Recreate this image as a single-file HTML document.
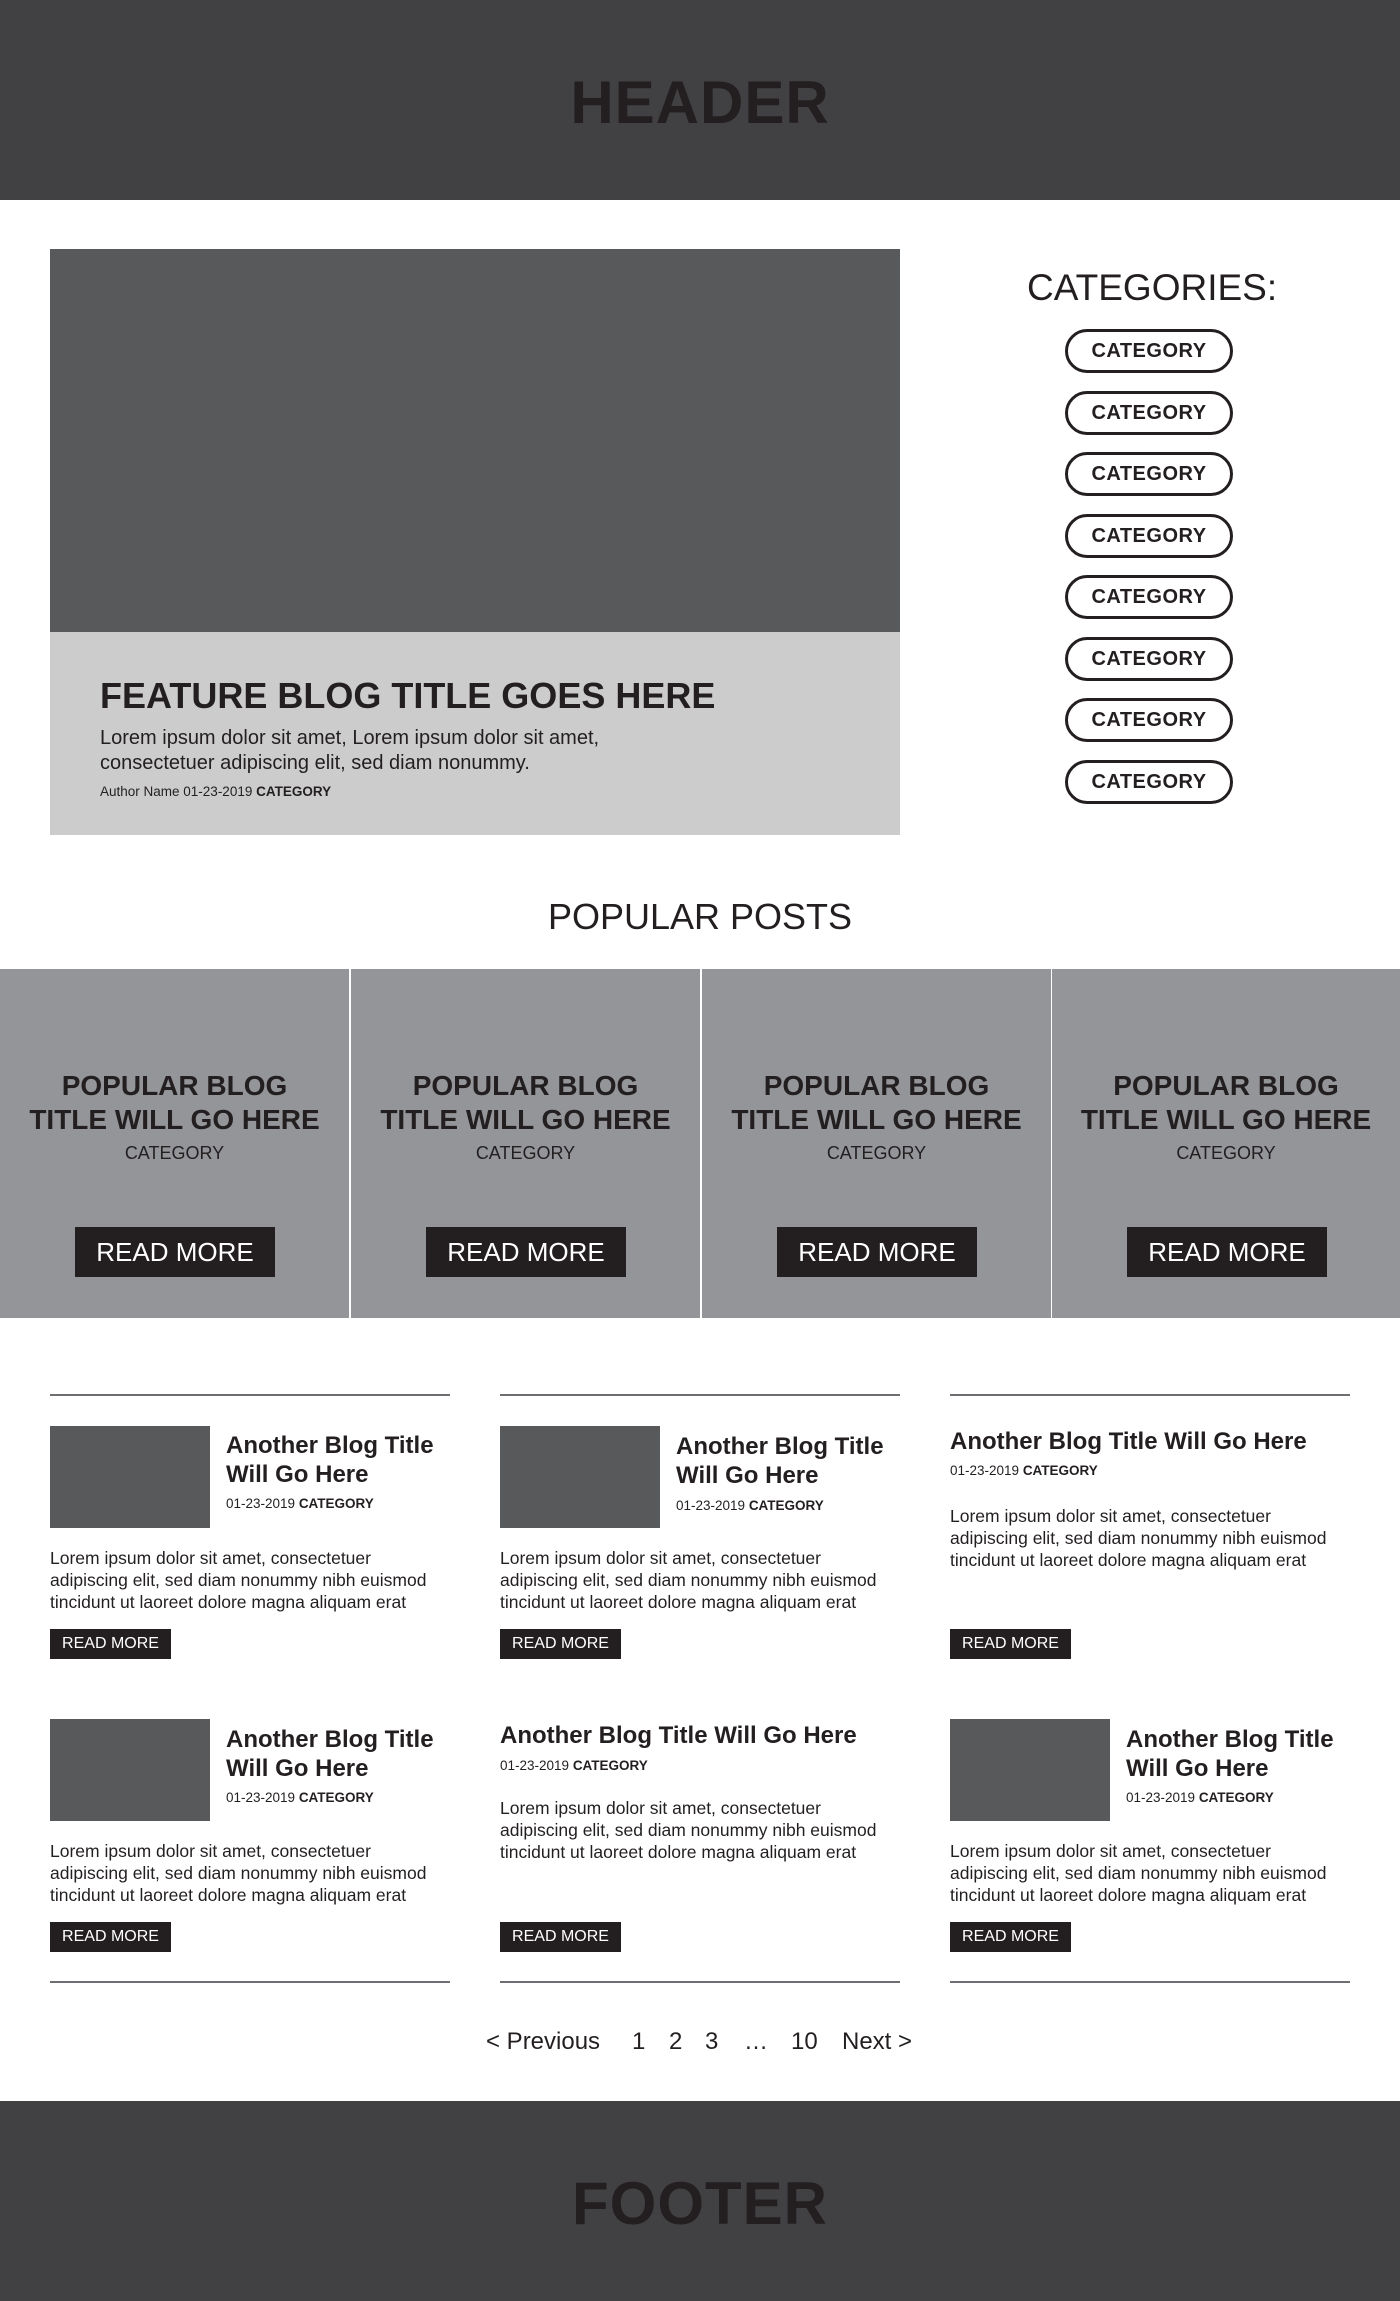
<!DOCTYPE html>
<html><head><meta charset="utf-8"><style>
*{margin:0;padding:0;box-sizing:border-box}
body{width:1400px;height:2301px;position:relative;background:#fff;font-family:"Liberation Sans",Arial,sans-serif;color:#231f20;overflow:hidden}
.a{position:absolute}
.hdr{left:0;width:1400px;height:200px;background:#414042;display:flex;align-items:center;justify-content:center;font-weight:bold;font-size:60px;color:#231f20;letter-spacing:1px}
.pill{left:1065px;width:168px;height:44px;border:3px solid #231f20;border-radius:22px;font-weight:bold;font-size:20px;display:flex;align-items:center;justify-content:center;letter-spacing:.5px}
.card{top:969px;width:349px;height:349px;background:#939598;text-align:center}
.card h3{position:absolute;top:100px;left:0;right:0;font-size:28px;line-height:34px;font-weight:bold}
.card .c{position:absolute;top:174px;left:0;right:0;font-size:18px}
.card .b{position:absolute;top:258px;left:75px;width:200px;height:50px;background:#231f20;color:#fff;font-size:26px;line-height:50px}
.line{height:2px;background:#6d6e71;width:400px}
.img{width:160px;height:102px;background:#58595b}
.t{font-weight:bold;font-size:24px;line-height:29px}
.m{font-size:13.5px}
.m b{font-weight:bold}
.p{font-size:17.5px;line-height:22px;width:400px}
.rm{width:121px;height:30px;background:#231f20;color:#fff;font-size:16px;line-height:30px;text-align:center}
.pg{top:2028px;font-size:24px}
</style></head><body>
<div class="a hdr" style="top:0;padding-top:4px">HEADER</div>

<div class="a" style="left:50px;top:249px;width:850px;height:383px;background:#58595b"></div>
<div class="a" style="left:50px;top:632px;width:850px;height:203px;background:#cccccc"></div>
<div class="a" style="left:100px;top:675px;font-size:36px;font-weight:bold">FEATURE BLOG TITLE GOES HERE</div>
<div class="a" style="left:100px;top:726px;font-size:20px;line-height:25px">Lorem ipsum dolor sit amet, Lorem ipsum dolor sit amet,<br>consectetuer adipiscing elit, sed diam nonummy.</div>
<div class="a" style="left:100px;top:784px;font-size:13.5px">Author Name 01-23-2019 <b>CATEGORY</b></div>

<div class="a" style="left:1027px;top:267px;font-size:37px">CATEGORIES:</div>
<div class="a pill" style="top:329px">CATEGORY</div>
<div class="a pill" style="top:391px">CATEGORY</div>
<div class="a pill" style="top:452px">CATEGORY</div>
<div class="a pill" style="top:514px">CATEGORY</div>
<div class="a pill" style="top:575px">CATEGORY</div>
<div class="a pill" style="top:637px">CATEGORY</div>
<div class="a pill" style="top:698px">CATEGORY</div>
<div class="a pill" style="top:760px">CATEGORY</div>

<div class="a" style="left:0;width:1400px;top:896px;text-align:center;font-size:36px">POPULAR POSTS</div>

<div class="a card" style="left:0"><h3>POPULAR BLOG<br>TITLE WILL GO HERE</h3><div class="c">CATEGORY</div><div class="b">READ MORE</div></div>
<div class="a card" style="left:351px"><h3>POPULAR BLOG<br>TITLE WILL GO HERE</h3><div class="c">CATEGORY</div><div class="b">READ MORE</div></div>
<div class="a card" style="left:702px"><h3>POPULAR BLOG<br>TITLE WILL GO HERE</h3><div class="c">CATEGORY</div><div class="b">READ MORE</div></div>
<div class="a card" style="left:1052px;width:348px"><h3>POPULAR BLOG<br>TITLE WILL GO HERE</h3><div class="c">CATEGORY</div><div class="b">READ MORE</div></div>

<div class="a line" style="left:50px;top:1394px"></div>
<div class="a line" style="left:500px;top:1394px"></div>
<div class="a line" style="left:950px;top:1394px"></div>
<div class="a line" style="left:50px;top:1981px"></div>
<div class="a line" style="left:500px;top:1981px"></div>
<div class="a line" style="left:950px;top:1981px"></div>

<div class="a img" style="left:50px;top:1426px"></div>
<div class="a t" style="left:226px;top:1431px">Another Blog Title<br>Will Go Here</div>
<div class="a m" style="left:226px;top:1496px">01-23-2019 <b>CATEGORY</b></div>
<div class="a p" style="left:50px;top:1547px">Lorem ipsum dolor sit amet, consectetuer<br>adipiscing elit, sed diam nonummy nibh euismod<br>tincidunt ut laoreet dolore magna aliquam erat</div>
<div class="a rm" style="left:50px;top:1629px">READ MORE</div>

<div class="a img" style="left:500px;top:1426px"></div>
<div class="a t" style="left:676px;top:1432px">Another Blog Title<br>Will Go Here</div>
<div class="a m" style="left:676px;top:1498px">01-23-2019 <b>CATEGORY</b></div>
<div class="a p" style="left:500px;top:1547px">Lorem ipsum dolor sit amet, consectetuer<br>adipiscing elit, sed diam nonummy nibh euismod<br>tincidunt ut laoreet dolore magna aliquam erat</div>
<div class="a rm" style="left:500px;top:1629px">READ MORE</div>

<div class="a t" style="left:950px;top:1427px">Another Blog Title Will Go Here</div>
<div class="a m" style="left:950px;top:1463px">01-23-2019 <b>CATEGORY</b></div>
<div class="a p" style="left:950px;top:1505px">Lorem ipsum dolor sit amet, consectetuer<br>adipiscing elit, sed diam nonummy nibh euismod<br>tincidunt ut laoreet dolore magna aliquam erat</div>
<div class="a rm" style="left:950px;top:1629px">READ MORE</div>

<div class="a img" style="left:50px;top:1719px"></div>
<div class="a t" style="left:226px;top:1725px">Another Blog Title<br>Will Go Here</div>
<div class="a m" style="left:226px;top:1790px">01-23-2019 <b>CATEGORY</b></div>
<div class="a p" style="left:50px;top:1840px">Lorem ipsum dolor sit amet, consectetuer<br>adipiscing elit, sed diam nonummy nibh euismod<br>tincidunt ut laoreet dolore magna aliquam erat</div>
<div class="a rm" style="left:50px;top:1922px">READ MORE</div>

<div class="a t" style="left:500px;top:1721px">Another Blog Title Will Go Here</div>
<div class="a m" style="left:500px;top:1758px">01-23-2019 <b>CATEGORY</b></div>
<div class="a p" style="left:500px;top:1797px">Lorem ipsum dolor sit amet, consectetuer<br>adipiscing elit, sed diam nonummy nibh euismod<br>tincidunt ut laoreet dolore magna aliquam erat</div>
<div class="a rm" style="left:500px;top:1922px">READ MORE</div>

<div class="a img" style="left:950px;top:1719px"></div>
<div class="a t" style="left:1126px;top:1725px">Another Blog Title<br>Will Go Here</div>
<div class="a m" style="left:1126px;top:1790px">01-23-2019 <b>CATEGORY</b></div>
<div class="a p" style="left:950px;top:1840px">Lorem ipsum dolor sit amet, consectetuer<br>adipiscing elit, sed diam nonummy nibh euismod<br>tincidunt ut laoreet dolore magna aliquam erat</div>
<div class="a rm" style="left:950px;top:1922px">READ MORE</div>

<div class="a pg" style="left:486px">&lt; Previous</div>
<div class="a pg" style="left:632px">1</div>
<div class="a pg" style="left:669px">2</div>
<div class="a pg" style="left:705px">3</div>
<div class="a pg" style="left:744px">…</div>
<div class="a pg" style="left:791px">10</div>
<div class="a pg" style="left:842px">Next &gt;</div>

<div class="a hdr" style="top:2101px;padding-top:4px">FOOTER</div>
</body></html>
